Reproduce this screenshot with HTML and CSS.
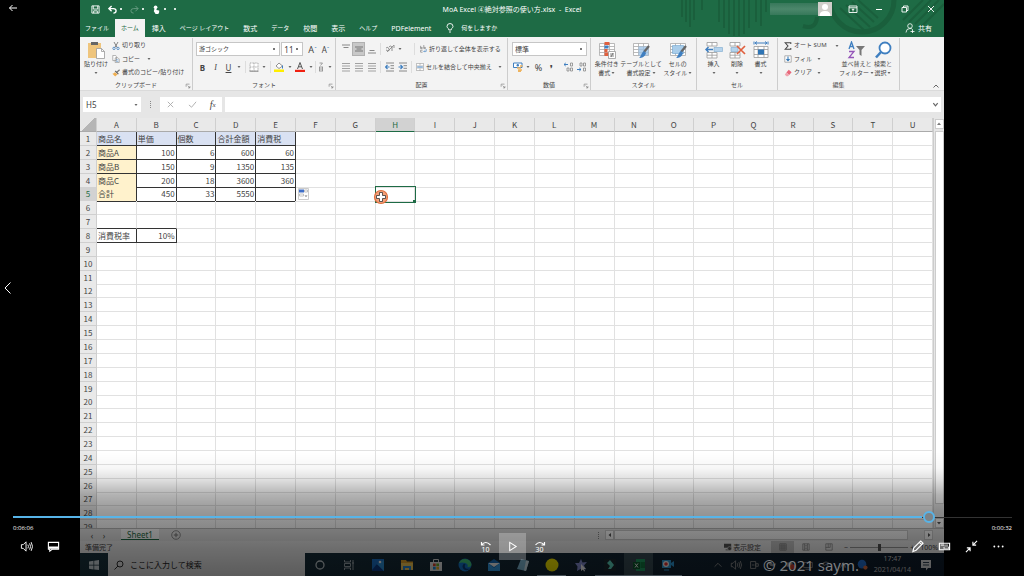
FILE: index.html
```html
<!DOCTYPE html>
<html lang="ja">
<head>
<meta charset="utf-8">
<title>MoA Excel</title>
<link rel="stylesheet" href="styles.css">
</head>
<body>
<svg class="defs" aria-hidden="true">
  <symbol id="caret" viewBox="0 0 4 4"><path d="M.5 1h3L2 3z" fill="#666"/></symbol>
  <symbol id="launch" viewBox="0 0 8 8"><path d="M1.500 5V1.500H6M3.500 3.500l3 3M6.500 4v2.500H4" fill="none" stroke="#777" stroke-width=".8"/></symbol>
  <symbol id="lines" viewBox="0 0 10 10"><path d="M1 1.500h8M1 6.500h8M1 4h8M1 9h8" stroke="#999" stroke-width=".9"/></symbol>
  <symbol id="grid" viewBox="0 0 18 18"><path d="M1.500 2.500h15v12h-15zM1.500 5.500h15M1.500 8.500h15M1.500 11.500h15M6.500 2.500v12M11.500 2.500v12" fill="#fff" stroke="#aaa" stroke-width=".8"/></symbol>
  <symbol id="brush" viewBox="0 0 18 18"><path d="M17 5l-5 6" stroke="#666" stroke-width="2.200"/><path d="M12 10l2 2c-1 4-4 5-7 5 2-1 2-5 5-7z" fill="#3f7fc0"/></symbol>
  <symbol id="speaker" viewBox="0 0 14 14"><path d="M1.500 5h2L6.500 2v10L3.500 9h-2z" fill="none" stroke="currentColor"/><path d="M8.500 5q1.200 2 0 4M10.300 3.600q2.200 3.400 0 6.800M12 2.300q3 4.700 0 9.400" fill="none" stroke="currentColor"/></symbol>
</svg>
<main class="player">
  <section class="video">
    <header class="titlebar">
      <svg class="art" viewBox="0 0 264 37" preserveAspectRatio="xMaxYMin slice" aria-hidden="true">
        <g fill="none" stroke="#1a5f3c" stroke-width="2">
          <path d="M2 0v17M6 0v22M10 0v27M14 0v20M22 0v10M39 0v22M44 0v28M49 0v34M54 0v36M59 0v36M64 0v34M69 0v28M76 0v22M81 0v26M86 0v12"/>
          <path d="M150 0a32 32 0 0 0 64 0" stroke-width="5"/>
          <path d="M160 8l24 22M166 5l24 22M172 2l22 20M178 0l20 18"/>
          <path d="M223 20L243 0M229 22L251 0M235 24L259 0M241 27L264 4"/>
          <path d="M123 26q13 4 14-9" stroke-width="4"/>
        </g>
      </svg>
      <div class="title-row">
        <div class="quick">
          <button aria-label="保存"><svg viewBox="0 0 10 10"><path d="M1 1h8v8H1zM2.500 1v3.500h5V1M3 9V6.500h4V9" fill="none" stroke="#fff"/></svg></button>
          <button aria-label="元に戻す"><svg viewBox="0 0 10 10"><path d="M4 1L1 4l3 3M1 4h5q3 0 3 2.500T6 9" fill="none" stroke="#fff" stroke-width="1.500"/></svg><i class="dot"></i></button>
          <button aria-label="やり直し"><svg viewBox="0 0 10 10" opacity=".35"><path d="M6 1l3 3-3 3M9 4H4Q1 4 1 6.500T4 9" fill="none" stroke="#fff"/></svg><i class="dot"></i></button>
          <button aria-label="タッチ"><svg viewBox="0 0 10 10"><circle cx="4" cy="2.500" r="2" fill="#fff"/><path d="M3 3h2v2.500l3 .5v2L7 10H4L2 7z" fill="#fff"/></svg><i class="dot"></i></button>
          <button aria-label="カスタマイズ"><i class="dot"></i></button>
        </div>
        <h1>MoA Excel ④絶対参照の使い方.xlsx&nbsp; -&nbsp; Excel</h1>
        <div class="window-tools">
          <span class="account"></span>
          <svg class="avatar" viewBox="0 0 14 14"><path d="M0 0h14v14H0z" fill="#d0ceca"/><circle cx="7" cy="5" r="3" fill="#fff"/><path d="M1.500 14q0-5 5.500-5t5.500 5z" fill="#fff"/></svg>
          <button aria-label="リボン表示"><svg viewBox="0 0 10 10"><path d="M1 2h8v6.500H1zM1 3.800h8M5 7.500V5M3.800 6L5 4.800 6.200 6" fill="none" stroke="#fff" stroke-width=".9"/></svg></button>
          <button aria-label="最小化"><svg viewBox="0 0 10 10"><path d="M2 5.500h6" stroke="#fff"/></svg></button>
          <button aria-label="元のサイズ"><svg viewBox="0 0 10 10"><path d="M2 3.500h4.500V8H2zM3.500 3.500V2H8v4.500H6.500" fill="none" stroke="#fff" stroke-width=".9"/></svg></button>
          <button aria-label="閉じる"><svg viewBox="0 0 10 10"><path d="M2 2l6 6M8 2L2 8" stroke="#fff" stroke-width=".9"/></svg></button>
        </div>
      </div>
      <nav class="tabs">
        <button class="kana file">ファイル</button>
        <button class="kana active">ホーム</button>
        <button>挿入</button>
        <button class="kana">ページ レイアウト</button>
        <button>数式</button>
        <button class="kana">データ</button>
        <button>校閲</button>
        <button>表示</button>
        <button class="kana">ヘルプ</button>
        <button>PDFelement</button>
        <button class="kana tell"><svg viewBox="0 0 8 10"><path d="M2.800 7V6Q1 4.800 1 3.500a3 3 0 0 1 6 0Q7 4.800 5.200 6v1zM3 9h2" fill="none" stroke="#fff" stroke-width=".9"/></svg>何をしますか</button>
        <button class="share"><svg viewBox="0 0 10 10"><circle cx="5" cy="3" r="2.300" fill="none" stroke="#fff" stroke-width=".8"/><path d="M1 9.500q0-4 4-4 2 0 2.500 1M5.500 8.500h4M7.500 6.500v3.500" fill="none" stroke="#fff" stroke-width=".8"/></svg>共有</button>
      </nav>
    </header>

    <section class="ribbon">
      <div class="group">
        <div class="body">
          <button class="big"><svg viewBox="0 0 18 18"><path d="M1 2h13v15H1z" fill="#efc57d"/><path d="M4 1h7v3H4z" fill="#666"/><path d="M9.500 7.500h5l3 3v7h-8z" fill="#fff" stroke="#999" stroke-width=".8"/><path d="M14.500 7.500v3h3" fill="none" stroke="#999" stroke-width=".8"/></svg><span>貼り付け</span><svg class="c"><use href="#caret"/></svg></button>
          <div class="stack">
            <button><svg class="i" viewBox="0 0 10 10"><path d="M2.500 0l4 7M7.500 0l-4 7" stroke="#666"/><circle cx="2.500" cy="8" r="1.500" fill="none" stroke="#3f7fc0"/><circle cx="7.500" cy="8" r="1.500" fill="none" stroke="#3f7fc0"/></svg>切り取り</button>
            <button><svg class="i" viewBox="0 0 10 10"><path d="M1 .5h3.500l1 1.500v5H1zM4 3.500h3.500L9 5v4.500H4z" fill="#fff" stroke="#888" stroke-width=".8"/><path d="M5 6h3M5 8h3" stroke="#3f7fc0" stroke-width=".7"/></svg>コピー&nbsp;<svg class="c"><use href="#caret"/></svg></button>
            <button><svg class="i" viewBox="0 0 10 10"><path d="M9.500 1L6 4" stroke="#777" stroke-width="1.500"/><path d="M4 2.500l4 4" stroke="#666" stroke-width="1.500"/><path d="M3.500 4L7 7q-2 1-3 2.500L.5 6Q2.500 5.500 3.500 4z" fill="#efae4f"/></svg>書式のコピー/貼り付け</button>
          </div>
        </div>
        <footer>クリップボード<svg><use href="#launch"/></svg></footer>
      </div>

      <div class="group">
        <div class="body rows">
          <div class="line">
            <select class="font-name" aria-label="フォント"><option>游ゴシック</option></select>
            <select class="font-size" aria-label="サイズ"><option>11</option></select>
            <button class="tool grow">A<sup>ˆ</sup></button>
            <button class="tool shrink">A<sup>ˇ</sup></button>
          </div>
          <div class="line">
            <button class="tool"><b>B</b></button><button class="tool"><em>I</em></button><button class="tool"><u>U</u></button><svg class="c"><use href="#caret"/></svg><hr>
            <button class="tool" aria-label="罫線"><svg viewBox="0 0 10 10"><path d="M1 1h8v8H1zM5 1v8M1 5h8" fill="#fff" stroke="#aaa" stroke-dasharray="1 .6"/><path d="M.5 9.200h9" stroke="#888"/></svg></button><svg class="c"><use href="#caret"/></svg><hr>
            <button class="tool" aria-label="塗りつぶし"><svg viewBox="0 0 10 10"><path d="M2 4l3-3 3.500 3L5 6.500z" fill="#fff" stroke="#777" stroke-width=".8"/><path d="M8.500 3.500v3" stroke="#3f7fc0"/><path d="M0 7.500h10V10H0z" fill="#ffee00"/></svg></button><svg class="c"><use href="#caret"/></svg>
            <button class="tool" aria-label="文字色"><svg viewBox="0 0 10 10"><path d="M2.500 7L5 .5 7.500 7M3.500 4.800h3" fill="none" stroke="#555"/><path d="M0 7.800h10V10H0z" fill="#f02010"/></svg></button><svg class="c"><use href="#caret"/></svg><hr class="slim">
            <button class="tool" aria-label="ふりがな"><svg viewBox="0 0 10 10"><path d="M3.500 1h3L4.500 3.500M3 5h4M3.500 7h3M3 9h4M3.500 5v4M6.500 5v4" fill="none" stroke="#888" stroke-width=".8"/></svg></button><svg class="c end"><use href="#caret"/></svg>
          </div>
        </div>
        <footer>フォント<svg><use href="#launch"/></svg></footer>
      </div>

      <div class="group">
        <div class="body rows">
          <div class="line">
            <button class="tool" aria-label="上揃え"><svg viewBox="0 0 10 10"><path d="M1 1h8M2.500 3.500h5" stroke="#888"/></svg></button>
            <button class="tool on" aria-label="上下中央"><svg viewBox="0 0 10 10"><path d="M1 3h8M2.500 5h5M1 7h8" stroke="#777"/></svg></button>
            <button class="tool" aria-label="下揃え"><svg viewBox="0 0 10 10"><path d="M2.500 6.500h5M1 9h8" stroke="#888"/></svg></button><hr>
            <button class="tool" aria-label="方向"><svg viewBox="0 0 10 10"><path d="M2 8l7-7M9 1v3" stroke="#999" fill="none"/><path d="M1 4q2-2 3 1T1 6M4 3q1-2 3 0v4" fill="none" stroke="#777" stroke-width=".8"/></svg></button><svg class="c"><use href="#caret"/></svg><hr class="far">
            <button class="label"><svg class="i" viewBox="0 0 10 10"><path d="M2 1v3.500h2V3H2M6 0v4.500h2V3H6M4.500 6.500H2V9h2.500" fill="none" stroke="#777" stroke-width=".8"/><path d="M9 5v3H6M7 7L6 8l1 1" fill="none" stroke="#3f7fc0" stroke-width=".8"/></svg>折り返して全体を表示する</button>
          </div>
          <div class="line">
            <button class="tool" aria-label="左揃え"><svg><use href="#lines"/></svg></button><button class="tool" aria-label="中央揃え"><svg><use href="#lines"/></svg></button><button class="tool" aria-label="右揃え"><svg><use href="#lines"/></svg></button><hr>
            <button class="tool" aria-label="字下げ解除"><svg viewBox="0 0 10 10"><path d="M1 1h8M5.500 3.700H9M5.500 6.300H9M1 9h8" stroke="#888"/><path d="M.5 5h4M2.500 3L.5 5l2 2" fill="none" stroke="#3f7fc0" stroke-width="1.200"/></svg></button>
            <button class="tool" aria-label="字下げ"><svg viewBox="0 0 10 10"><path d="M1 1h8M5.500 3.700H9M5.500 6.300H9M1 9h8" stroke="#888"/><path d="M.5 5h4M2.500 3l2 2-2 2" fill="none" stroke="#3f7fc0" stroke-width="1.200"/></svg></button><hr>
            <button class="label"><svg class="i" viewBox="0 0 10 10"><path d="M.5.500h9v9h-9zM5 .5v2.500M5 7v2.500" fill="#fff" stroke="#999" stroke-width=".8"/><path d="M1 3.500h8M1 6.500h8" stroke="#999" stroke-width=".6"/><path d="M1.500 5h7" stroke="#3f7fc0" stroke-width="1.200"/></svg>セルを結合して中央揃え</button><svg class="c"><use href="#caret"/></svg>
          </div>
        </div>
        <footer>配置<svg><use href="#launch"/></svg></footer>
      </div>

      <div class="group">
        <div class="body rows">
          <div class="line"><select class="format" aria-label="表示形式"><option>標準</option></select></div>
          <div class="line">
            <button class="tool" aria-label="通貨"><svg viewBox="0 0 10 10"><path d="M.5 1h8.500v4.500H.5z" fill="#fff" stroke="#3f7fc0"/><circle cx="4.800" cy="3.200" r="1.200" fill="#3f7fc0"/><path d="M4 6h4M5 8h4M5 9.500h3M7 4h2.500" stroke="#eeb35e" stroke-width="1.400"/></svg></button><svg class="c"><use href="#caret"/></svg>
            <button class="tool pct">%</button><button class="tool"><b>❜</b></button><hr>
            <button class="tool" aria-label="小数点以下を増やす"><svg viewBox="0 0 10 10"><path d="M0 2.500h4M1.700 1L0 2.500 1.700 4" fill="none" stroke="#3f7fc0"/><path d="M6.500 1h2v3h-2zM3 6h2v3H3zM6.500 6h2v3h-2z" fill="none" stroke="#888" stroke-width=".8"/></svg></button>
            <button class="tool" aria-label="小数点以下を減らす"><svg viewBox="0 0 10 10"><path d="M0 7.500h4M2.300 6L4 7.500 2.300 9" fill="none" stroke="#3f7fc0"/><path d="M3 1h2v3H3zM6.500 1h2v3h-2zM6.500 6h2v3h-2z" fill="none" stroke="#888" stroke-width=".8"/></svg></button>
          </div>
        </div>
        <footer>数値<svg><use href="#launch"/></svg></footer>
      </div>

      <div class="group">
        <div class="body even">
          <button class="big"><svg viewBox="0 0 18 18"><use href="#grid"/><path d="M6.500 1h5v3h-5zM6.500 8h3v3h-3zM6.500 11.500h5V15h-5z" fill="#e0603f"/><path d="M6.500 4.500h4v3h-4z" fill="#3f7fc0"/><path d="M10.500 10.500h7v7h-7z" fill="#fff" stroke="#999" stroke-width=".8"/><path d="M12 13h4M12 15h4M15 12l-2 4" stroke="#555" stroke-width=".7"/></svg><span>条件付き<br>書式<svg class="c"><use href="#caret"/></svg></span></button>
          <button class="big"><svg viewBox="0 0 18 18"><use href="#grid"/><path d="M6.500 5.500h10v9h-10z" fill="#9dc3e6" opacity=".8"/><use href="#brush"/></svg><span>テーブルとして<br>書式設定<svg class="c"><use href="#caret"/></svg></span></button>
          <button class="big"><svg viewBox="0 0 18 18"><use href="#grid"/><path d="M3.500 4.500h11v8h-11z" fill="#a9cdea" stroke="#6fa4cf" stroke-width=".6"/><use href="#brush"/></svg><span>セルの<br>スタイル<svg class="c"><use href="#caret"/></svg></span></button>
        </div>
        <footer>スタイル</footer>
      </div>

      <div class="group">
        <div class="body even">
          <button class="big"><svg viewBox="0 0 18 18"><path d="M2 1.500h10V5H2zM7 1.500V5M2 11.500h10V17H2zM7 11.500V17M2 14.200h10" fill="#fff" stroke="#999" stroke-width=".8"/><path d="M9 6.500h8.500v4H9z" fill="#b5d3ec" stroke="#7ba7cc" stroke-width=".6"/><path d="M8 8.500H1M3.500 6L1 8.500 3.500 11" fill="none" stroke="#3f7fc0" stroke-width="1.500"/></svg><span>挿入</span><svg class="c"><use href="#caret"/></svg></button>
          <button class="big"><svg viewBox="0 0 18 18"><path d="M2 1.500h10V5H2zM7 1.500V5M2 11.500h10V17H2zM7 11.500V17M2 14.200h10" fill="#fff" stroke="#999" stroke-width=".8"/><path d="M3 6.500h7v4H3z" fill="#b5d3ec" stroke="#7ba7cc" stroke-width=".6"/><path d="M9 5l8 8M17 5l-8 8" stroke="#e0603f" stroke-width="1.700"/></svg><span>削除</span><svg class="c"><use href="#caret"/></svg></button>
          <button class="big"><svg viewBox="0 0 18 18"><path d="M2 5.500h14v11H2zM2 8.500h14M2 13.500h14M6 5.500v11M12 5.500v11" fill="#fff" stroke="#999" stroke-width=".8"/><path d="M6 8.500h6v5H6z" fill="#2f75b5"/><path d="M3 2h12M5 .5L3 2l2 1.500M13 .5L15 2l-2 1.500M2 .5v3M16 .5v3" fill="none" stroke="#3f7fc0"/></svg><span>書式</span><svg class="c"><use href="#caret"/></svg></button>
        </div>
        <footer>セル</footer>
      </div>

      <div class="group">
        <div class="body">
          <div class="stack edit">
            <button><svg class="i" viewBox="0 0 10 10"><path d="M8.500 2.500V1h-7l3.500 4-3.500 4h7V7.500" fill="none" stroke="#444" stroke-width="1.300"/></svg>オート SUM&nbsp;&nbsp;<svg class="c"><use href="#caret"/></svg></button>
            <button><svg class="i" viewBox="0 0 10 10"><path d="M1 1h8v8H1z" fill="#fff" stroke="#888" stroke-width=".8"/><path d="M5 2v5M3 5.200l2 2 2-2" fill="none" stroke="#2f75b5" stroke-width="1.300"/></svg>フィル<svg class="c"><use href="#caret"/></svg></button>
            <button><svg class="i" viewBox="0 0 10 10"><path d="M6 1l3.500 3-3 3.500-3.500-3z" fill="#e8677a"/><path d="M3 4.500L6.500 7.500 5 9H3L1 7z" fill="#f0a4ae"/></svg>クリア<svg class="c"><use href="#caret"/></svg></button>
          </div>
          <button class="big"><svg viewBox="0 0 18 18"><path d="M2 8l2.500-7L7 8M3 5.500h3" fill="none" stroke="#3f7fc0" stroke-width="1.300"/><path d="M2 10.500h5l-5 6h5" fill="none" stroke="#9455b8" stroke-width="1.300"/><path d="M9 5h9l-3.500 4v6l-2-1.500V9z" fill="#777"/></svg><span>並べ替えと<br>フィルター<svg class="c"><use href="#caret"/></svg></span></button>
          <button class="big"><svg viewBox="0 0 18 18"><circle cx="11" cy="7" r="5.500" fill="#fff" stroke="#3f7fc0" stroke-width="1.800"/><path d="M7 11l-5 5.500" stroke="#3f7fc0" stroke-width="2.600"/></svg><span>検索と<br>選択<svg class="c"><use href="#caret"/></svg></span></button>
        </div>
        <footer>編集</footer>
      </div>
      <div class="group last"><button aria-label="リボンを折りたたむ"><svg viewBox="0 0 8 8"><path d="M1.500 5.500L4 3l2.500 2.500" fill="none" stroke="#666"/></svg></button></div>
    </section>

    <section class="formula">
      <div class="name-box"><input value="H5" aria-label="名前ボックス"><svg class="c"><use href="#caret"/></svg></div>
      <span class="grip"></span>
      <div class="fx">
        <button aria-label="キャンセル"><svg viewBox="0 0 10 10"><path d="M2 2l6 6M8 2L2 8" stroke="#aaa"/></svg></button>
        <button aria-label="入力"><svg viewBox="0 0 10 10"><path d="M1 5.500L4 8l5-6" fill="none" stroke="#aaa"/></svg></button>
        <button class="fn">f<small>x</small></button>
      </div>
      <div class="entry"><input aria-label="数式"><svg viewBox="0 0 8 8"><path d="M1.500 2.500L4 5.500l2.500-3" fill="none" stroke="#666" stroke-width="1.400"/></svg></div>
    </section>

    <section class="sheet">
      <table id="cells"><thead></thead><tbody></tbody></table>
      <div class="vscroll"><button aria-label="上へ"><svg viewBox="0 0 6 6"><path d="M1 4l2-2.500L5 4z" fill="#777"/></svg></button><span class="thumb"></span><button aria-label="下へ"><svg viewBox="0 0 6 6"><path d="M1 2l2 2.500L5 2z" fill="#555"/></svg></button></div>
    </section>

    <section class="sheet-tabs">
      <button aria-label="前のシート">‹</button><button aria-label="次のシート">›</button>
      <button class="sheet-tab">Sheet1</button>
      <button class="add" aria-label="新しいシート"><svg viewBox="0 0 10 10"><circle cx="5" cy="5" r="4.300" fill="none" stroke="#777" stroke-width=".8"/><path d="M5 2.800v4.400M2.800 5h4.400" stroke="#777"/></svg></button>
      <div class="hscroll"><span class="grip"></span><button aria-label="左へ"><svg viewBox="0 0 6 6"><path d="M4 1L1.500 3 4 5z" fill="#555"/></svg></button><span class="thumb"></span><button aria-label="右へ"><svg viewBox="0 0 6 6"><path d="M2 1l2.500 2L2 5z" fill="#555"/></svg></button></div>
    </section>

    <section class="status">
      <span class="ready">準備完了</span>
      <button class="display"><svg viewBox="0 0 10 10"><path d="M0 1h9v5H0zM2 8h4v1H2z" fill="#555"/><circle cx="7" cy="7" r="2.500" fill="#555" stroke="#ddd" stroke-width=".8"/></svg>表示設定</button>
      <button class="view on" aria-label="標準"><svg viewBox="0 0 10 10"><path d="M1 1h8v8H1zM1 3.700h8M1 6.300h8M3.700 1v8M6.300 1v8" fill="none" stroke="#777" stroke-width=".8"/></svg></button>
      <button class="view" aria-label="ページレイアウト"><svg viewBox="0 0 10 10"><path d="M1 1h8v8H1zM3 1v8M7 1v8M4 3h2M4 5h2M4 7h2" fill="none" stroke="#777" stroke-width=".8"/></svg></button>
      <button class="view" aria-label="改ページ"><svg viewBox="0 0 10 10"><path d="M1 1h8v8H1zM1 5.500h5.500V1M4 1v4.500" fill="none" stroke="#777" stroke-width=".8"/></svg></button>
      <label class="zoom">−<input type="range" aria-label="ズーム" value="50">+</label>
      <span class="percent">100%</span>
    </section>

    <section class="taskbar">
      <button class="start" aria-label="スタート"><svg viewBox="0 0 10 10"><path d="M0 1.500l4.500-.7v4H0zM5.200.7L10 0v4.800H5.200zM0 5.400h4.500v4L0 8.700zM5.200 5.400H10V10l-4.800-.6z" fill="#d5e0e4"/></svg></button>
      <label class="search"><svg viewBox="0 0 10 10"><circle cx="6" cy="4" r="3" fill="none" stroke="#333"/><path d="M4 6L.5 9.500" stroke="#333"/></svg><input placeholder="ここに入力して検索" aria-label="検索"></label>
      <div class="apps">
        <button aria-label="Cortana"><svg viewBox="0 0 14 14"><circle cx="7" cy="7" r="4" fill="none" stroke="#c8d2d6" stroke-width="1.300"/></svg></button>
        <button aria-label="タスクビュー"><svg viewBox="0 0 14 14"><path d="M2.500 2v2h6V2M2.500 12v-2h6v2M2.500 5.500h6v3h-6zM11 2v10M10 5h2" fill="none" stroke="#aeb9be" stroke-width=".9"/></svg></button>
        <button aria-label="フォト"><svg viewBox="0 0 14 14"><path d="M1 1h12v12H1z" fill="#1c75cf"/><path d="M1 12l5-6 7 7H1z" fill="#0d3d8b"/><path d="M6 6l7-4v11z" fill="#2c95e0"/><circle cx="9" cy="4" r="1.300" fill="#fff"/></svg></button>
        <button aria-label="エクスプローラー"><svg viewBox="0 0 14 14"><path d="M1 2h5l1 1.500h6V12H1z" fill="#e9a728"/><path d="M1 5h12v7H1z" fill="#ffd45c"/><path d="M3 8h8v4H9v-2H5v2H3z" fill="#2b8edb"/></svg></button>
        <button aria-label="Store"><svg viewBox="0 0 14 14"><path d="M4.500 4V1.500h5V4" fill="none" stroke="#ddd"/><path d="M1 4h12v9H1z" fill="#eee"/><path d="M4 5.500h2.700v2.700H4z" fill="#e2432a"/><path d="M7.300 5.500H10v2.700H7.300z" fill="#71b526"/><path d="M4 8.800h2.700v2.700H4z" fill="#1b91e0"/><path d="M7.300 8.800H10v2.700H7.300z" fill="#f5b71d"/></svg></button>
        <button aria-label="Edge"><svg viewBox="0 0 14 14"><circle cx="7" cy="7" r="6.500" fill="#147bd1"/><path d="M1 5a6.500 6.500 0 0 1 12.500 2Q13 9.500 9.500 9q1-3-2-4Q4 4 1 5z" fill="#43cc7d"/><path d="M6 5.500q-3 3 0 6 3 2 6-1-4 1-5-1-.8-2 .5-3z" fill="#0a3d7c"/></svg></button>
        <button aria-label="メール"><svg viewBox="0 0 14 14"><path d="M1 5l6-4 6 4v8H1z" fill="#1570c0"/><path d="M1 5h12L7 9z" fill="#fff"/><path d="M1 5l6 5 6-5v8H1z" fill="#35a3ef"/></svg></button>
        <button aria-label="メモ帳"><svg viewBox="0 0 14 14"><path d="M5 1l8 2-3 10-9-2z" fill="#83bfdc"/><path d="M10 2.500l3 .5-3 10-2-.5z" fill="#d9edf6"/></svg></button>
        <button class="open" aria-label="録画"><svg viewBox="0 0 14 14"><circle cx="7" cy="7" r="6.500" fill="#fff000"/></svg></button>
        <button aria-label="マウス"><svg viewBox="0 0 14 14"><path d="M7 1l1.500 3.500L13 4l-3 3.500 2 4-4.500-1L3 13l.5-4.500L1 5h4z" fill="#8a93d9"/><path d="M7 6v7l2-1.500 1 2 1-.5-1-2h2z" fill="#fff"/></svg></button>
        <button class="open" aria-label="Filmora"><svg viewBox="0 0 14 14"><path d="M1 1h12v12H1z" fill="#1b2930"/><path d="M4 5l3-3 4 5-3 4H5l2-3z" fill="#5fdcc5"/></svg></button>
        <button class="open current" aria-label="Excel"><svg viewBox="0 0 14 14"><path d="M4 1h9v12H4z" fill="#21a366"/><path d="M8.500 4H13v6H8.500z" fill="#107c41"/><path d="M1 4h7v7H1z" fill="#0d5c2f"/><path d="M3 5.500l3 4M6 5.500l-3 4" stroke="#fff"/></svg></button>
        <button class="open" aria-label="レコーダー"><svg viewBox="0 0 14 14"><path d="M1 2h9v8H1zM10 5l3-2v6l-3-2z" fill="#2e9edd"/><circle cx="5" cy="6" r="3" fill="#fff"/><circle cx="5" cy="6" r="1.800" fill="#e33"/><path d="M3 12h5" stroke="#2e9edd"/></svg></button>
      </div>
      <div class="tray">
        <svg viewBox="0 0 14 14"><path d="M3 9l4-4 4 4" fill="none" stroke="currentColor"/></svg>
        <svg><use href="#speaker"/></svg>
        <svg viewBox="0 0 14 14"><path d="M3 3h6v8H3zM9 5.500h3v3H9zM4.500 7h3" fill="none" stroke="currentColor"/></svg>
        <svg viewBox="0 0 14 14"><path d="M2 4l4-1 2 3 4-1-2 4-5-1z" fill="currentColor"/></svg>
        <svg viewBox="0 0 14 14"><path d="M3 4h7v5H3z" fill="currentColor"/><circle cx="10" cy="9" r="3" fill="#d9432f"/></svg>
        <svg viewBox="0 0 14 14"><path d="M2 4h10v6H2zM4 12h6" fill="none" stroke="currentColor"/></svg>
        <svg viewBox="0 0 14 14"><path d="M2 6q5-5 10 0M4 8q3-3 6 0" fill="none" stroke="currentColor"/></svg>
        <svg viewBox="0 0 14 14"><path d="M3 10l3-6 3 6M8 10V5" fill="none" stroke="currentColor"/></svg>
        <svg viewBox="0 0 14 14"><circle cx="7" cy="6" r="5" fill="#2372d4"/><circle cx="11" cy="10" r="2.500" fill="#e0703f"/></svg>
      </div>
      <div class="clock"><time>17:47</time><time>2021/04/14</time></div>
      <svg class="notice" viewBox="0 0 14 14"><path d="M2 2h10v8H9l-2 2.500V10H2z" fill="#e4e4e4"/><path d="M4 4.500h6M4 7h6" stroke="#345"/></svg>
    </section>
  </section>

  <section class="controls">
    <button class="back" aria-label="戻る"><svg viewBox="0 0 10 10"><path d="M9 5H1.500M4.500 2l-3 3 3 3" fill="none" stroke="#fff"/></svg></button>
    <button class="previous" aria-label="前へ"><svg viewBox="0 0 10 14"><path d="M7.500 1.500L2 7l5.500 5.500" fill="none" stroke="#fff"/></svg></button>
    <p class="mark">© 2021 saym.</p>
    <div class="panel">
      <input class="seek" type="range" min="0" max="1000" value="922" aria-label="再生位置">
      <div class="times"><span>0:06:06</span><span>0:00:32</span></div>
      <div class="buttons">
        <div>
          <button aria-label="音量"><svg><use href="#speaker"/></svg></button>
          <button aria-label="字幕"><svg viewBox="0 0 14 14"><path d="M1.500 2.500h11v7.500h-7L3 12v-2H1.500z" fill="none" stroke="#fff" stroke-width="1.200"/><path d="M2 7h10v2.500H2z" fill="#fff"/></svg></button>
        </div>
        <div>
          <button class="skip" aria-label="10秒戻る"><svg viewBox="0 0 12 5"><path d="M1.500 4Q5.500-1 10.500 4M1.500 1v3h3" fill="none" stroke="#fff" stroke-width="1.200"/></svg>10</button>
          <button class="play" aria-label="再生"><svg viewBox="0 0 14 14"><path d="M4 2.500L11 7l-7 4.500z" fill="none" stroke="#fff" stroke-width="1.100"/></svg></button>
          <button class="skip" aria-label="30秒進む"><svg viewBox="0 0 12 5"><path d="M1.500 4Q5.500-1 10.500 4M10.500 1v3h-3" fill="none" stroke="#fff" stroke-width="1.200"/></svg>30</button>
        </div>
        <div>
          <button aria-label="編集"><svg viewBox="0 0 14 14"><path d="M2 12.500l1-4L10.500 1 13 3.500 5.500 11zM9 2.500L11.500 5" fill="none" stroke="#fff" stroke-width="1.200"/></svg></button>
          <button aria-label="ミニ表示"><svg viewBox="0 0 14 14"><path d="M1.500 3.500h11v7h-11z" fill="none" stroke="#fff" stroke-width="1.200"/><path d="M3 5.500h8M6.500 7.500h5v2h-5z" fill="none" stroke="#fff"/></svg></button>
          <button aria-label="全画面終了"><svg viewBox="0 0 14 14"><path d="M13 1L8.500 5.500M8.500 2v3.500H12M1 13l4.500-4.500M2 8.500h3.500V12" fill="none" stroke="#fff" stroke-width="1.200"/></svg></button>
          <button aria-label="その他"><svg viewBox="0 0 14 14"><circle cx="2.500" cy="7" r="1" fill="#fff"/><circle cx="7" cy="7" r="1" fill="#fff"/><circle cx="11.500" cy="7" r="1" fill="#fff"/></svg></button>
        </div>
      </div>
    </div>
  </section>
</main>
<script src="sheet.js"></script>
</body>
</html>
```

FILE: styles.css
```css
* { box-sizing: border-box; }
body { margin: 0; background: #000; font-family: "Noto Sans", "Noto Sans CJK JP", sans-serif; font-size: 7px; line-height: 9px; color: #444; }
button, input, select { font: inherit; color: inherit; border: 0; background: none; padding: 0; margin: 0; outline: 0; min-width: 0; }
button { display: inline-flex; align-items: center; justify-content: center; white-space: nowrap; }
svg { width: 10px; height: 10px; flex: none; display: block; }
svg.c { width: 4px; height: 4px; }
.defs { position: absolute; width: 0; height: 0; }
.player { position: relative; height: 100vh; min-height: 400px; overflow: hidden; }
.video { height: 100%; margin: 0 80px; display: flex; flex-direction: column; background: #e6e6e6; overflow: hidden; }

.titlebar { position: relative; background: #1e6b45; color: #fff; flex: none; }
.art { position: absolute; right: 0; top: 0; width: 264px; height: 37px; }
.title-row { position: relative; height: 18px; display: grid; grid-template-columns: 1fr auto 1fr; align-items: center; }
.quick { display: flex; gap: 8px; padding-left: 11px; }
.quick button { gap: 3px; }
.quick svg { width: 9px; height: 9px; }
.dot { width: 2px; height: 2px; background: #d5e5dc; }
h1 { margin: 0; font-size: 7px; font-weight: 400; white-space: nowrap; }
.window-tools { display: flex; align-items: center; justify-content: flex-end; padding-right: 8px; gap: 16px; }
.account { width: 48px; height: 12px; background: linear-gradient(#37785a, #4c876b, #37785a); }
.window-tools .avatar { width: 14px; height: 14px; margin-left: -16px; }
.tabs { position: relative; height: 19px; display: flex; align-items: stretch; gap: 14px; padding: 1px 12px 0 5px; }
.kana { font-size: 6px; }
.tabs .file { margin-right: -8px; }
.tabs .active { background: #f3f3f3; color: #1e6b45; padding: 0 6px; margin-right: -7px; }
.tell { gap: 6px; }
.share { margin-left: auto; gap: 3px; }

.ribbon { flex: none; display: grid; grid-template-columns: 113fr 143fr 172fr 83fr 106fr 81fr 122fr 44fr; background: #f3f3f3; padding: 1px 0 0; border-bottom: 1px solid #dadada; }
.group { display: flex; flex-direction: column; border-right: 1px solid #cdcdcd; padding-top: 3px; min-width: 0; }
.body { height: 40px; display: flex; align-items: flex-start; padding: 0 4px; }
.group footer { position: relative; height: 9px; text-align: center; font-size: 6px; line-height: 9px; }
.group footer svg { position: absolute; right: 1px; top: 2px; width: 6px; height: 6px; }
.big { flex-direction: column; font-size: 6px; line-height: 9px; }
.big > svg:first-child { width: 18px; height: 18px; margin-bottom: 1px; }
.big > .c { margin-top: 2px; }
.big span { display: block; }
.big span .c { display: inline-block; margin-left: 1px; }
.stack { display: flex; flex-direction: column; height: 36px; justify-content: space-between; align-items: flex-start; padding-left: 4px; font-size: 6px; }
.stack button { height: 9px; gap: 2px; }
.stack .i, .label .i { width: 8px; height: 8px; }
.stack .c { margin-left: 3px; }
.edit { width: 57px; padding-left: 2px; }
.even { padding: 0 2px; justify-content: space-evenly; }
.rows { flex-direction: column; gap: 4px; padding: 1px 3px 0; }
.line { display: flex; align-items: center; height: 14px; width: 100%; }
.line hr { border: 0; width: 1px; height: 12px; background: #ddd; margin: 0 2px; }
.line .far { margin-left: 10px; }
.line .slim { margin: 0; }
.line .c { margin: 0 2px; }
.line .end { margin: 0; }
.tool { width: 13px; height: 14px; flex: none; font-size: 8px; }
.tool svg { width: 10px; height: 10px; }
.tool em, .fn { font-family: "Liberation Serif", serif; }
.tool sup { font-size: 6px; color: #3f7fc0; line-height: 6px; }
.grow { font-size: 9px; margin-left: 3px; }
.tool.on { background: #c8c8c8; border: 1px solid #b0b0b0; }
.pct { font-size: 9px; }
.label { gap: 2px; font-size: 6px; margin-left: 2px; }
.label + .c { margin-left: 6px; }
select { appearance: none; height: 14px; border: 1px solid #c6c6c6; padding: 0 2px; background: #fff linear-gradient(#777, #777) no-repeat right 4px center / 2px 2px; }
.font-name { width: 86px; font-size: 6px; }
.font-size { width: 22px; font-size: 8px; margin-left: 1px; }
.format { width: 75px; margin-left: 1px; }
.last { border: 0; justify-content: flex-end; align-items: flex-end; padding-right: 4px; }
.last svg { width: 8px; height: 8px; }

.formula { flex: none; display: flex; align-items: center; height: 27px; padding: 0 3px; font-size: 8px; }
.name-box { width: 58px; height: 15px; background: #fff; display: flex; align-items: center; padding: 0 3px; }
.name-box input { flex: 1; width: 0; }
.grip { width: 1px; height: 7px; border-left: 1px dotted #888; margin: 0 9px; }
.fx { width: 62px; height: 15px; background: #fff; display: flex; justify-content: space-around; margin-right: 3px; }
.fx svg { width: 9px; height: 9px; }
.fn { font-style: italic; font-size: 10px; }
.fn small { font-size: 7px; padding-top: 2px; }
.entry { flex: 1; height: 15px; background: #fff; display: flex; align-items: center; padding-right: 2px; }
.entry input { flex: 1; }
.entry svg { width: 7px; height: 7px; }

.sheet { flex: 1; min-height: 0; display: flex; overflow: hidden; }
#cells { flex: 1; display: block; font-family: "Noto Sans CJK JP", sans-serif; font-size: 8px; line-height: 13px; }
#cells thead, #cells tbody { display: grid; }
#cells tbody { height: 402px; grid-template-rows: repeat(29, 1fr); background: #fff; }
#cells tr { display: grid; grid-template-columns: 17px repeat(21, 1fr); min-height: 0; }
#cells th { font-weight: 400; background: #e9e9e9; border-right: 1px solid #cfcfcf; border-bottom: 1px solid #cfcfcf; padding: 0; text-align: center; }
#cells thead th { height: 14px; border-bottom-color: #aaa; }
#cells .corner { background: linear-gradient(135deg, transparent 50%, #b5b5b5 50%); }
#cells th.hot { background: #d2d2d2; color: #1e6b45; }
#cells thead th.hot { border-bottom-color: #1e6b45; }
#cells td { position: relative; border-right: 1px solid #e1e1e1; border-bottom: 1px solid #e1e1e1; padding: 0 1px; min-width: 0; white-space: nowrap; }
#cells td.boxed { border-right-color: #333; border-bottom-color: #333; }
#cells td.above { border-bottom-color: #333; }
#cells td.head { background: #d9e1f2; }
#cells td.side { background: #fff2cc; }
#cells td.num { text-align: right; }
#cells td.selected { outline: 1px solid #1e6b45; z-index: 1; }
.handle { position: absolute; right: -2px; bottom: -2px; width: 3px; height: 3px; background: #1e6b45; }
.cursor { position: absolute; left: -3px; top: 2px; width: 16px; height: 16px; }
.smart { width: 11px; height: 12px; margin: 1px; }
.vscroll { width: 11px; display: flex; flex-direction: column; align-items: center; padding: 1px 1px 0; border-left: 1px solid #ccc; }
.vscroll button, .hscroll button { width: 9px; height: 10px; background: #fff; border: 1px solid #ccc; flex: none; }
.vscroll svg, .hscroll svg { width: 6px; height: 6px; }
.vscroll .thumb { width: 9px; flex: 1; margin: 2px 0 14px; background: #fff; border: 1px solid #ccc; }

.sheet-tabs { flex: none; height: 13px; display: flex; align-items: center; border-top: 1px solid #bbb; padding-left: 6px; font-size: 8px; }
.sheet-tabs > button { width: 12px; }
.sheet-tabs .sheet-tab { width: 38px; height: 11px; margin: 0 11px; background: #fff; color: #1e6b45; border-bottom: 1px solid #1e6b45; align-self: flex-start; }
.hscroll { margin-left: auto; width: 39%; display: flex; align-items: center; margin-right: 11px; }
.hscroll .thumb { height: 10px; flex: 1; margin-right: 16px; background: #fff; border: 1px solid #ccc; }
.hscroll .grip { margin: 0 6px 0 0; }
.status { flex: none; height: 12px; display: flex; align-items: center; padding: 0 6px 0 5px; background: #f0f0f0; }
.display { margin-left: auto; gap: 1px; margin-right: 10px; }
.status svg { width: 8px; height: 8px; }
.view { width: 23px; height: 12px; }
.view.on { background: #c8c8c8; }
.zoom { display: flex; align-items: center; gap: 2px; margin: 0 6px 0 4px; }
.zoom input { appearance: none; width: 58px; height: 7px; background: linear-gradient(#999, #999) no-repeat center / 100% 1px; }
.zoom input::-webkit-slider-thumb { appearance: none; width: 3px; height: 7px; background: #555; }

.taskbar { flex: none; height: 23px; display: flex; align-items: center; background: linear-gradient(90deg, #1a343f, #0e1c2c); color: #ccc; }
.start { width: 28px; }
.search { width: 197px; height: 23px; background: #f0f0f0; display: flex; align-items: center; gap: 6px; padding-left: 6px; color: #222; font-size: 8px; }
.search input { flex: 1; }
.search input::placeholder { color: #222; opacity: 1; }
.apps { display: flex; align-self: stretch; }
.apps button { width: 29px; position: relative; }
.apps svg { width: 14px; height: 14px; }
.apps .open { border-bottom: 1px solid #b9d3e6; padding-top: 1px; }
.apps .current { background: #384c55; }
.tray { display: flex; gap: 6px; margin-left: auto; margin-right: 6px; color: #999; }
.tray svg { width: 12px; height: 12px; }
.clock { display: flex; flex-direction: column; align-items: center; gap: 1px; margin-right: 8px; }
.clock time { height: 10px; }
.notice { width: 14px; height: 14px; margin-right: 11px; }

.controls { position: absolute; inset: 0; color: #fff; display: flex; flex-direction: column; justify-content: flex-end; background: linear-gradient(to top, rgba(0,0,0,.62), rgba(0,0,0,.54) 29px, rgba(0,0,0,.45) 52px, rgba(0,0,0,.4) 66px, rgba(0,0,0,.3) 81px, rgba(0,0,0,.13) 96px, rgba(0,0,0,.03) 108px, transparent 124px); }
.back { position: absolute; left: 8px; top: 3px; }
.previous { position: absolute; left: 3px; top: 50%; transform: translateY(-50%); }
.previous svg { width: 10px; height: 14px; }
.mark { position: absolute; right: 165px; bottom: 1px; margin: 0; font-size: 15px; line-height: 20px; color: #7b7e81; }
.panel { position: relative; padding: 0 12px 16px 13px; }
.seek { appearance: none; display: block; width: 100%; height: 12px; background: linear-gradient(90deg, #57b4e8 91%, transparent 91%) no-repeat center / 100% 2px, linear-gradient(#333, #333) no-repeat center / 100% 1px; }
.seek::-webkit-slider-thumb { appearance: none; width: 12px; height: 12px; border: 2px solid #57b4e8; border-radius: 50%; background: #7d8387; }
.times { display: flex; justify-content: space-between; font-family: "Open Sans", sans-serif; font-size: 6px; line-height: 10px; }
.buttons { display: grid; grid-template-columns: 1fr auto 1fr; }
.buttons > div { display: flex; }
.buttons > div:last-child { justify-content: flex-end; }
.buttons button { width: 27px; height: 27px; }
.buttons svg { width: 13px; height: 13px; }
.buttons .play { background: rgba(255,255,255,.25); }
.buttons .skip { flex-direction: column; font-size: 7px; line-height: 7px; }
.buttons .skip svg { width: 12px; height: 5px; }
```

FILE: sheet.js
```js
const letters = "ABCDEFGHIJKLMNOPQRSTU".split("");
const rows = {
  1: ["商品名", "単価", "個数", "合計金額", "消費税"],
  2: ["商品A", "100", "6", "600", "60"],
  3: ["商品B", "150", "9", "1350", "135"],
  4: ["商品C", "200", "18", "3600", "360"],
  5: ["合計", "450", "33", "5550", ""],
  8: ["消費税率", "10%"]
};
const smartTag = '<svg class="smart" viewBox="0 0 11 12"><path d="M.5.500h10v11H.5z" fill="#fff" stroke="#ccc"/><path d="M1 1.500h5v3H1z" fill="#3f6fc8"/><path d="M6.500 2h3v2h-3zM1.500 6h4v2h-4z" fill="none" stroke="#aaa" stroke-width=".7"/><path d="M6.500 7.500h3L8 9z" fill="#777"/></svg>';
const pointer = '<span class="handle"></span><svg class="cursor" viewBox="0 0 16 16"><circle cx="8" cy="8" r="6.500" fill="#f2a27c" stroke="#e0703f" stroke-width="1.200"/><path d="M6.500 3.500h3v3h3v3h-3v3h-3v-3h-3v-3h3z" fill="#fff" stroke="#333" stroke-width=".8"/></svg>';

document.querySelector("#cells thead").innerHTML =
  '<tr><th class="corner"></th>' +
  letters.map(l => `<th${l === "H" ? ' class="hot"' : ""}>${l}</th>`).join("") + "</tr>";

let html = "";
for (let r = 1; r <= 29; r++) {
  html += `<tr><th${r === 5 ? ' class="hot"' : ""}>${r}</th>`;
  letters.forEach((l, c) => {
    const text = rows[r] && rows[r][c];
    const names = [];
    if (text !== undefined) {
      names.push("boxed");
      if (r === 1) names.push("head");
      else if (c === 0 && r < 6) names.push("side");
      if (/^\d/.test(text)) names.push("num");
    }
    if (r === 7 && c < 2) names.push("above");
    let content = text || "";
    if (r === 5 && l === "F") content = smartTag;
    if (r === 5 && l === "H") { names.push("selected"); content = pointer; }
    html += `<td class="${names.join(" ")}">${content}</td>`;
  });
  html += "</tr>";
}
document.querySelector("#cells tbody").innerHTML = html;
```
